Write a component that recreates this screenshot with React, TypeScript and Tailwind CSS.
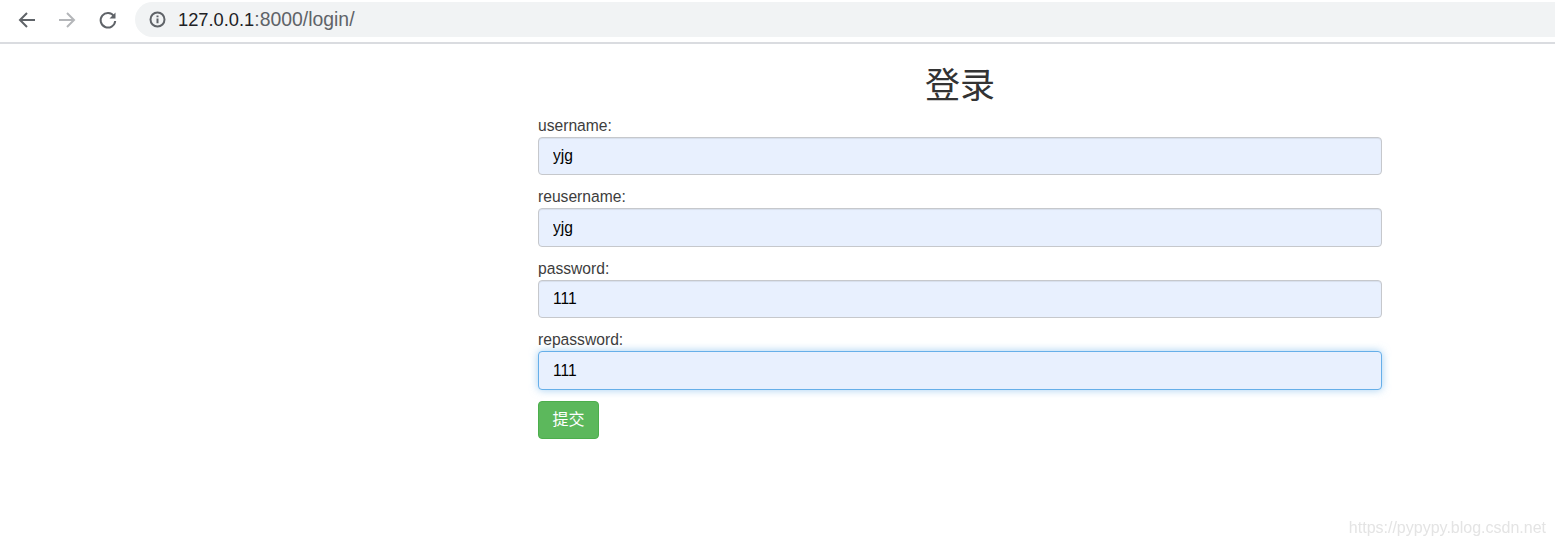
const fields = [
  { label: 'username:', value: 'yjg', focused: false },
  { label: 'reusername:', value: 'yjg', focused: false },
  { label: 'password:', value: '111', focused: false },
  { label: 'repassword:', value: '111', focused: true },
];

const cjk = "font-['Liberation_Sans','Noto_Sans_CJK_SC',sans-serif]";

const BrowserBar = () => (
  <div className="flex h-[44px] items-start border-b-2 border-[#dadce0] bg-white pt-[2px]">
    <div className="flex h-[36px] w-[135px] items-center">
      <svg className="ml-[17px]" width="20" height="20" viewBox="0 0 20 20" fill="none" stroke="#5f6368" strokeWidth="2">
        <path d="M18 10H3M10 3l-7 7 7 7" />
      </svg>
      <svg className="ml-[20px]" width="20" height="20" viewBox="0 0 20 20" fill="none" stroke="#b4b6b9" strokeWidth="2">
        <path d="M2 10h15M10 3l7 7-7 7" />
      </svg>
      <svg className="ml-[21px]" width="20" height="20" viewBox="0 0 20 20" fill="none" stroke="#5f6368" strokeWidth="2">
        <path d="M16 6.2A7.3 7.3 0 1 0 17.2 11" />
        <path d="M17.5 2.5v6h-6z" fill="#5f6368" stroke="none" />
      </svg>
    </div>
    <div className="flex h-[35px] flex-1 items-center rounded-l-[18px] bg-[#f1f3f4] pl-[14px]">
      <svg width="17" height="17" viewBox="0 0 17 17" fill="none" stroke="#5f6368" strokeWidth="2">
        <circle cx="8.5" cy="8.5" r="7" />
        <path d="M8.5 7.6v4.6M8.5 4.4v1.9" />
      </svg>
      <span className={`ml-[12px] pt-[1px] text-[18.3px] text-[#202124] ${cjk}`}>
        127.0.0.1<span className="text-[19.4px] text-[#5f6368]">:8000/login/</span>
      </span>
    </div>
  </div>
);

const Field = ({ label, value, focused }: { label: string; value: string; focused: boolean }) => (
  <div className="mb-[14px]">
    <label className={`block h-[19px] text-[15.65px] leading-[15px] text-[#3d3d3d] ${cjk}`}>{label}</label>
    <input
      readOnly
      value={value}
      className={
        focused
          ? `block h-[38.5px] w-full rounded-[4px] border border-[#66afe9] bg-[#e8f0fe] px-[14px] text-[15.65px] text-black shadow-[0_0_8px_rgba(102,175,233,0.6)] outline-none ${cjk}`
          : `block h-[38.5px] w-full rounded-[4px] border border-[#c6c8cc] bg-[#e8f0fe] px-[14px] text-[15.65px] text-black shadow-[inset_0_1px_1px_rgba(0,0,0,0.075)] outline-none ${cjk}`
      }
    />
  </div>
);

export default function App() {
  return (
    <div className="relative h-[547px] overflow-hidden bg-white">
      <BrowserBar />
      <div className="ml-[538px] w-[844px]">
        <h1 className={`mt-[20px] mb-[9.75px] h-[44px] text-center text-[35px] leading-[44px] font-normal text-[#333333] ${cjk}`}>登录</h1>
        {fields.map((f) => (
          <Field key={f.label} {...f} />
        ))}
        <button className={`-mt-[2.75px] block h-[38px] w-[61px] rounded-[4px] border border-[#4cae4c] bg-[#5cb85c] text-[16px] text-white ${cjk}`}>
          提交
        </button>
      </div>
      <div className={`absolute right-[9px] bottom-[7px] text-[16px] text-[#e4e4e4] blur-[0.5px] ${cjk}`}>
        https://pypypy.blog.csdn.net
      </div>
    </div>
  );
}
